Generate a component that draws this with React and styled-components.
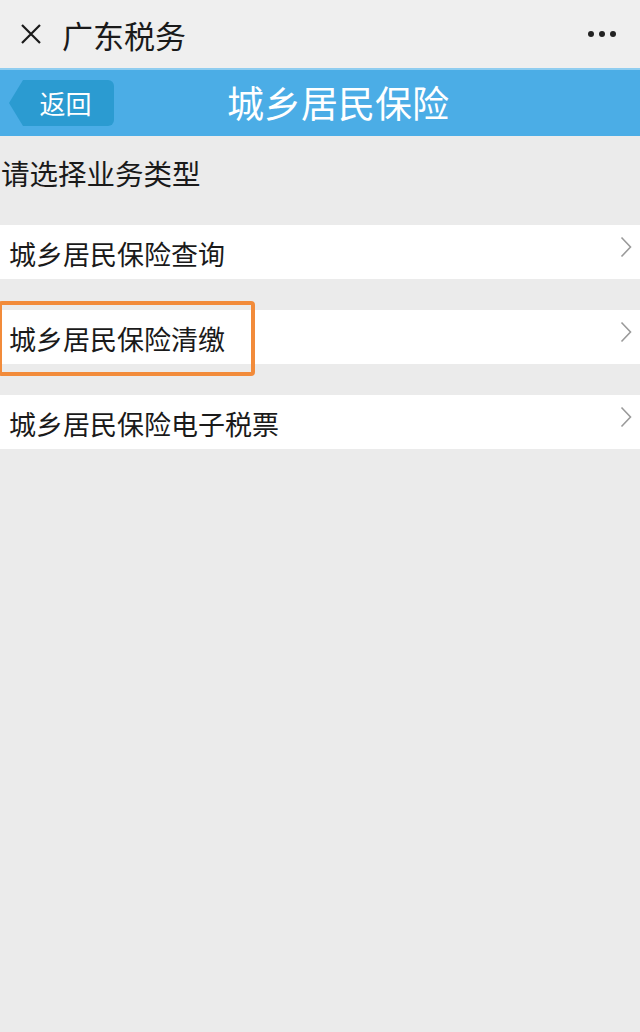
import React from "react";
import styled, { createGlobalStyle } from "styled-components";

const Global = createGlobalStyle`
  html, body { margin: 0; padding: 0; }
  body {
    background: #ebebeb;
    font-family: "Noto Sans CJK SC", "Noto Sans", sans-serif;
  }
`;

const Page = styled.div`
  width: 640px;
  min-height: 1032px;
  background: #ebebeb;
  display: flex;
  flex-direction: column;
`;

const TopBar = styled.div`
  height: 68px;
  background: #efefef;
  display: flex;
  align-items: center;
  padding: 0 24px 0 20px;
  box-sizing: border-box;
`;

const TopTitle = styled.div`
  font-size: 31px;
  color: #1a1a1a;
  margin-left: 20px;
  flex: 1;
  line-height: 1;
`;

const More = styled.div`
  display: flex;
  gap: 5px;
`;

const Dot = styled.span`
  width: 6px;
  height: 6px;
  border-radius: 50%;
  background: #222;
`;

const Header = styled.div`
  height: 68px;
  background: #4badE6;
  border-top: 2px solid #8fcdf0;
  box-sizing: border-box;
  display: grid;
  grid-template-columns: 130px 1fr 94px;
  align-items: center;
`;

const BackButton = styled.div`
  margin-left: 9px;
  width: 105px;
  height: 46px;
  background: #2b9bd1;
  clip-path: polygon(14px 0, 100% 0, 100% 100%, 14px 100%, 0 50%);
  border-radius: 0 6px 6px 0;
  display: flex;
  align-items: center;
  justify-content: center;
  padding-left: 8px;
  box-sizing: border-box;
  color: #fff;
  font-size: 26px;
  line-height: 1;
`;

const HeaderTitle = styled.div`
  text-align: center;
  color: #fff;
  font-size: 37px;
  line-height: 1;
  padding-bottom: 2px;
`;

const Prompt = styled.div`
  font-size: 28.5px;
  color: #1a1a1a;
  padding: 22px 0 0 1px;
  height: 89px;
  box-sizing: border-box;
  line-height: 30px;
`;

const List = styled.div`
  display: flex;
  flex-direction: column;
  gap: 31px;
`;

const Row = styled.div`
  position: relative;
  height: 54px;
  background: #fff;
  display: flex;
  align-items: center;
  padding: 0 8px 0 9px;
  box-sizing: border-box;
`;

const RowText = styled.div`
  flex: 1;
  font-size: 27px;
  color: #1a1a1a;
  line-height: 1;
  padding-top: 2px;
`;

const Highlight = styled.div`
  position: absolute;
  left: -2px;
  top: -9px;
  width: 257px;
  height: 75px;
  border: 4px solid #f28b3a;
  border-radius: 4px;
  box-sizing: border-box;
  pointer-events: none;
`;

const Chevron = () => (
  <svg width="12" height="22" viewBox="0 0 12 22" style={{ marginTop: -10 }}>
    <path d="M1.5 1.5 L10.5 11 L1.5 20.5" fill="none" stroke="#9a9a9a" strokeWidth="1.6" />
  </svg>
);

const CloseIcon = () => (
  <svg width="22" height="22" viewBox="0 0 22 22">
    <path d="M2 2 L20 20 M20 2 L2 20" stroke="#1a1a1a" strokeWidth="2.2" />
  </svg>
);

const items = [
  { label: "城乡居民保险查询" },
  { label: "城乡居民保险清缴", highlight: true },
  { label: "城乡居民保险电子税票" },
];

export default function App() {
  return (
    <Page>
      <Global />
      <TopBar>
        <CloseIcon />
        <TopTitle>广东税务</TopTitle>
        <More>
          <Dot />
          <Dot />
          <Dot />
        </More>
      </TopBar>
      <Header>
        <BackButton>返回</BackButton>
        <HeaderTitle>城乡居民保险</HeaderTitle>
        <div />
      </Header>
      <Prompt>请选择业务类型</Prompt>
      <List>
        {items.map((it) => (
          <Row key={it.label}>
            <RowText>{it.label}</RowText>
            <Chevron />
            {it.highlight && <Highlight />}
          </Row>
        ))}
      </List>
    </Page>
  );
}
